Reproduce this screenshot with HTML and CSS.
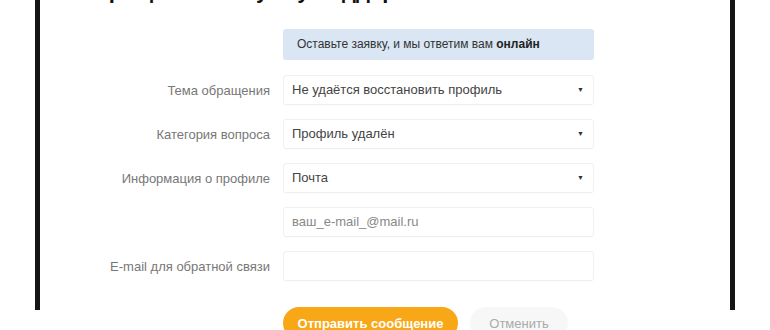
FILE: index.html
```html
<!DOCTYPE html>
<html lang="ru">
<head>
    <meta charset="UTF-8">
    <title>Обращение в службу поддержки</title>
    <link rel="stylesheet" href="styles.css">
</head>
<body>
    <div class="screen">
        <h1 class="title">Обращение в службу поддержки</h1>

        <form class="support-form">
            <div class="row">
                <span class="label"></span>
                <div class="notice">Оставьте заявку, и мы ответим вам <b>онлайн</b></div>
            </div>

            <div class="row">
                <span class="label">Тема обращения</span>
                <div class="field select">Не удаётся восстановить профиль<span class="arrow">▼</span></div>
            </div>
            <div class="row">
                <span class="label">Категория вопроса</span>
                <div class="field select">Профиль удалён<span class="arrow">▼</span></div>
            </div>
            <div class="row">
                <span class="label">Информация о профиле</span>
                <div class="field select">Почта<span class="arrow">▼</span></div>
            </div>
            <div class="row">
                <span class="label"></span>
                <div class="field muted">ваш_e-mail_@mail.ru</div>
            </div>
            <div class="row">
                <span class="label">E-mail для обратной связи</span>
                <div class="field"></div>
            </div>

            <div class="row actions-row">
                <span class="label"></span>
                <div class="actions">
                    <button type="button" class="btn-send">Отправить сообщение</button>
                    <button type="button" class="btn-cancel">Отменить</button>
                </div>
            </div>
        </form>
    </div>
</body>
</html>
```

FILE: styles.css
```css
/* Support form */
* { margin: 0; padding: 0; box-sizing: border-box; }
body { background: #fff; font-family: "Liberation Sans", Arial, sans-serif; height: 330px; overflow: hidden; }

.screen { margin-left: 35px; width: 700px; height: 330px; border-left: 5px solid #151515; border-right: 5px solid #151515; background: #fff; }

.title { margin-top: -20px; padding-left: 38px; font-size: 22px; line-height: 22px; font-weight: bold; color: #111; white-space: nowrap; }

.support-form { display: flex; flex-direction: column; gap: 14px; padding-top: 27px; }
.row { display: grid; grid-template-columns: 230px 311px; column-gap: 13px; align-items: center; }
.row:first-child { margin-bottom: 1px; }
.label { text-align: right; font-size: 13px; color: #777; white-space: nowrap; }

.notice { height: 31px; line-height: 31px; padding-left: 14px; background: #dae6f4; border-radius: 3px; font-size: 12px; color: #333; }
.notice b { color: #222; }

.field { position: relative; height: 30px; line-height: 28px; padding-left: 8px; border: 1px solid #f0f0f0; border-radius: 3px; font-size: 13px; color: #444; box-shadow: 0 1px 1px rgba(0, 0, 0, 0.02); }
.field.muted { color: #888; }
.arrow { position: absolute; right: 9px; top: 0; font-size: 7px; color: #333; }

.actions-row { margin-top: 12px; }
.actions { display: flex; gap: 12px; }
.actions button { height: 32px; border: none; border-radius: 16px; font-family: inherit; font-size: 13px; cursor: pointer; }
.btn-send { width: 175px; background: #f8a717; color: #fff; font-weight: bold; }
.btn-cancel { width: 98px; background: #f7f7f7; color: #aaa; }
```
